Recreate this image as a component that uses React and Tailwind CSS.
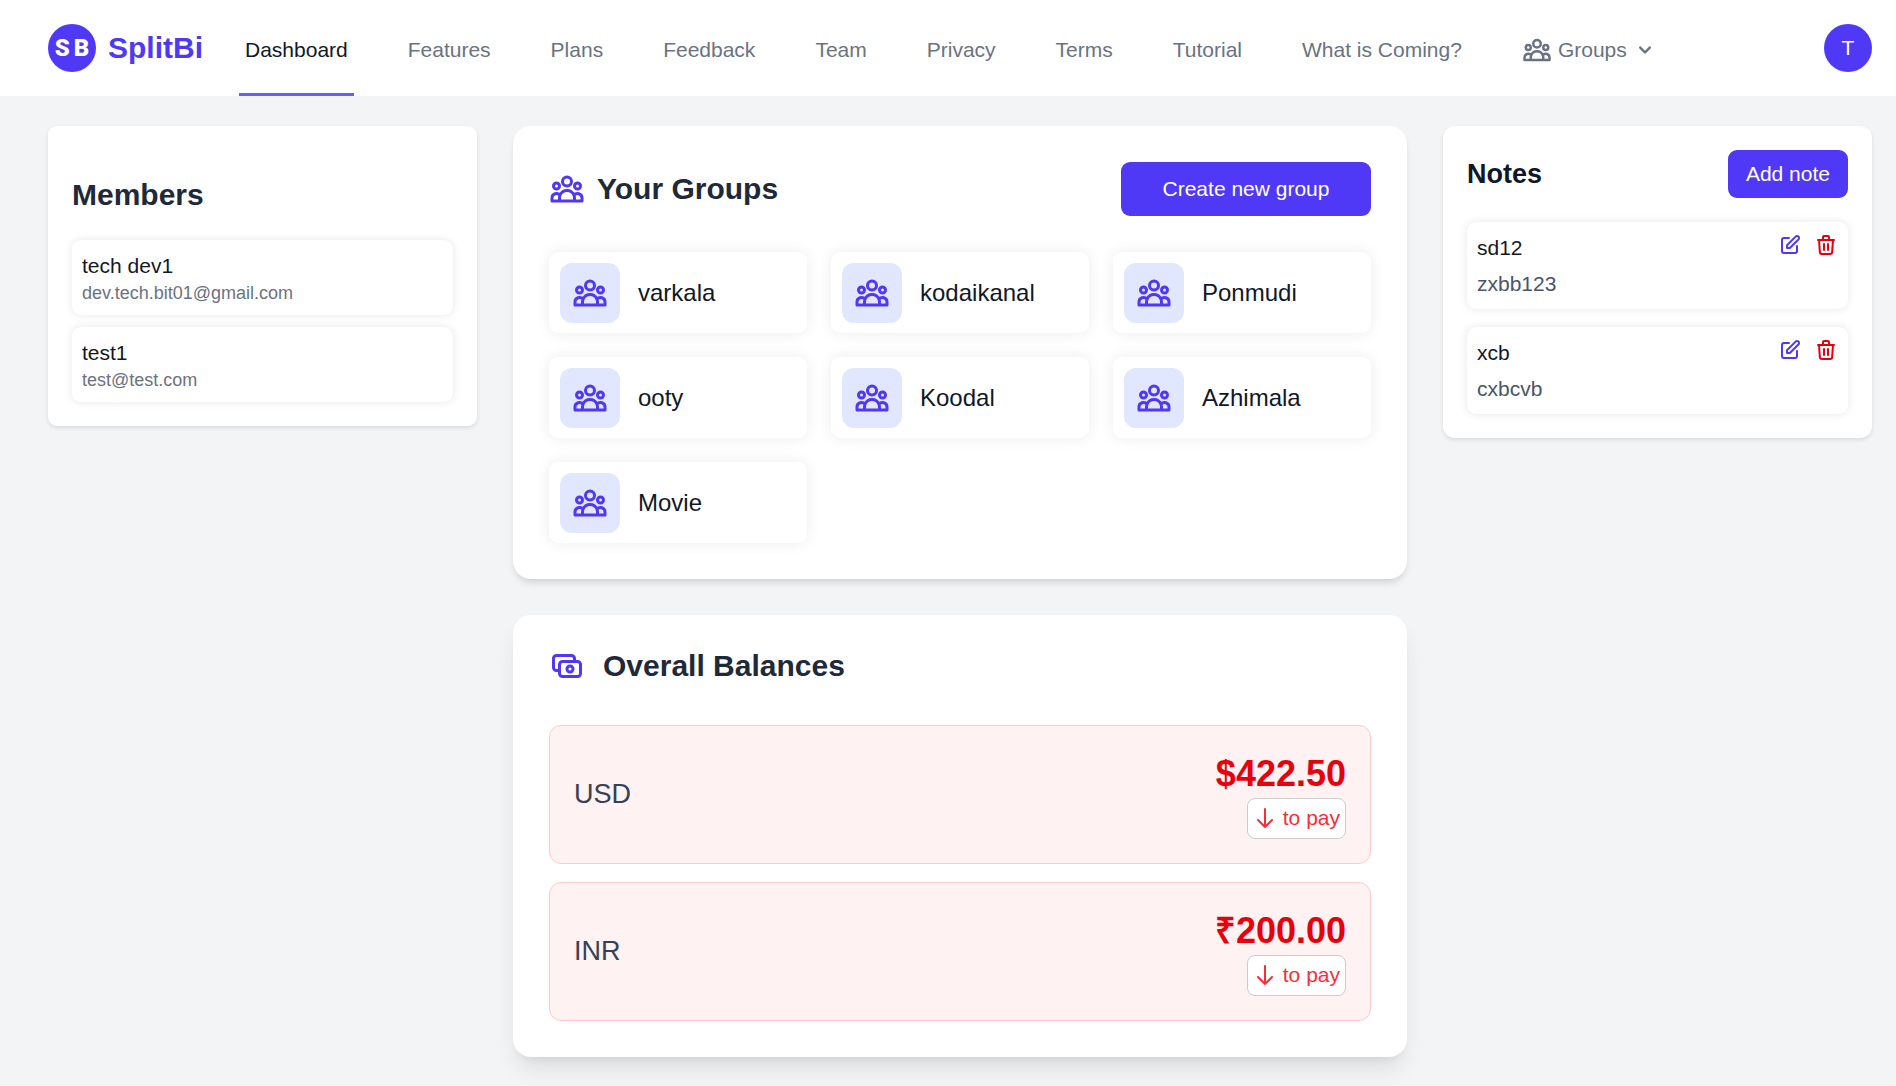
import {
  HiOutlineUserGroup,
  HiOutlineCash,
  HiOutlinePencilAlt,
  HiOutlineTrash,
  HiOutlineArrowDown,
  HiChevronDown,
} from "react-icons/hi";

const navLinks = [
  "Dashboard",
  "Features",
  "Plans",
  "Feedback",
  "Team",
  "Privacy",
  "Terms",
  "Tutorial",
  "What is Coming?",
];

const members = [
  { name: "tech dev1", email: "dev.tech.bit01@gmail.com" },
  { name: "test1", email: "test@test.com" },
];

const groups = ["varkala", "kodaikanal", "Ponmudi", "ooty", "Koodal", "Azhimala", "Movie"];

const balances = [
  { currency: "USD", amount: "$422.50" },
  { currency: "INR", amount: "₹200.00" },
];

const notes = [
  { title: "sd12", body: "zxbb123" },
  { title: "xcb", body: "cxbcvb" },
];

function Header() {
  return (
    <header className="flex h-24 items-center bg-white pl-12 pr-6">
      <a href="#" className="flex items-center gap-3">
        <span className="flex size-12 items-center justify-center gap-1 rounded-full bg-indigo-600 font-[Impact,Roboto,sans-serif] text-[24px] font-black text-white">
          <span>S</span>
          <span>B</span>
        </span>
        <span className="text-[30px] leading-[42px] font-bold text-indigo-600">SplitBi</span>
      </a>
      <nav className="ml-9 flex h-full gap-12">
        {navLinks.map((label, i) => (
          <a
            key={label}
            href="#"
            aria-current={i === 0 ? "page" : undefined}
            className={
              i === 0
                ? "flex items-center border-b-3 border-indigo-500 px-1.5 pt-1.5 whitespace-nowrap text-gray-900"
                : "flex items-center border-b-3 border-transparent px-1.5 pt-1.5 whitespace-nowrap text-gray-500"
            }
          >
            {label}
          </a>
        ))}
        <button
          type="button"
          className="flex items-center gap-1.5 border-b-3 border-transparent px-1.5 pt-1.5 text-gray-500"
        >
          <HiOutlineUserGroup size={30} />
          Groups
          <HiChevronDown size={24} />
        </button>
      </nav>
      <button type="button" className="ml-auto size-12 rounded-full bg-indigo-600 text-white">
        T
      </button>
    </header>
  );
}

function Members() {
  return (
    <section className="rounded-[9px] bg-white px-6 pt-12 pb-6 shadow-[0_2px_4px_rgba(0,0,0,0.1)]">
      <h2 className="text-[30px] leading-[42px] font-bold text-gray-800">Members</h2>
      <ul className="mt-6 flex flex-col gap-3">
        {members.map((m) => (
          <li
            key={m.name}
            className="rounded-[9px] bg-white px-2.5 pt-[11px] pb-2.5 shadow-[0_0_8px_rgba(0,0,0,0.1)]"
          >
            <p className="text-gray-900">{m.name}</p>
            <p className="text-[18px] leading-6 text-gray-500">{m.email}</p>
          </li>
        ))}
      </ul>
    </section>
  );
}

function Groups() {
  return (
    <section className="rounded-[18px] bg-white p-9 shadow-[0_6px_9px_-2px_rgba(0,0,0,0.1),0_3px_6px_-3px_rgba(0,0,0,0.1)]">
      <div className="flex items-center justify-between">
        <h2 className="flex items-center gap-3 text-[30px] leading-[42px] font-bold text-gray-800">
          <HiOutlineUserGroup size={36} className="text-indigo-600" />
          Your Groups
        </h2>
        <button type="button" className="h-[54px] w-[250px] rounded-[9px] bg-indigo-600 text-white">
          Create new group
        </button>
      </div>
      <ul className="mt-9 grid grid-cols-3 gap-6">
        {groups.map((name) => (
          <li key={name}>
            <a
              href="#"
              className="flex items-center gap-[18px] rounded-[9px] bg-white px-[11px] pt-[11px] pb-2.5 text-[24px] text-gray-900 shadow-[0_0_15px_rgba(0,0,0,0.08)]"
            >
              <span className="flex size-[60px] items-center justify-center rounded-xl bg-indigo-100 text-indigo-600">
                <HiOutlineUserGroup size={36} />
              </span>
              {name}
            </a>
          </li>
        ))}
      </ul>
    </section>
  );
}

function Balances() {
  return (
    <section className="rounded-[18px] bg-white px-9 pt-[30px] pb-9 shadow-[0_15px_23px_-5px_rgba(0,0,0,0.1),0_6px_9px_-6px_rgba(0,0,0,0.1)]">
      <h2 className="flex items-center gap-[18px] text-[30px] leading-[42px] font-bold text-gray-800">
        <HiOutlineCash size={36} className="text-indigo-600" />
        Overall Balances
      </h2>
      <ul className="mt-[38px] flex flex-col gap-[18px]">
        {balances.map((b) => (
          <li
            key={b.currency}
            className="flex items-center justify-between rounded-xl border border-red-200 bg-red-50 p-6"
          >
            <span className="pb-0.5 text-[27px] leading-[42px] text-gray-700">{b.currency}</span>
            <div className="flex flex-col items-end">
              <span className="text-[36px] leading-[48px] font-bold text-red-600">{b.amount}</span>
              <span className="flex items-center gap-1.5 rounded-lg border border-[#ccc] bg-white px-[5px] pt-1 pb-[5px] text-red-500">
                <HiOutlineArrowDown size={24} />
                to pay
              </span>
            </div>
          </li>
        ))}
      </ul>
    </section>
  );
}

function Notes() {
  return (
    <section className="rounded-xl bg-white p-6 shadow-[0_2px_4px_rgba(0,0,0,0.1)]">
      <div className="flex items-center justify-between">
        <h2 className="text-[27px] leading-[42px] font-bold text-gray-900">Notes</h2>
        <button type="button" className="h-12 rounded-[9px] bg-indigo-600 px-[18px] text-white">
          Add note
        </button>
      </div>
      <ul className="mt-6 flex flex-col gap-[18px]">
        {notes.map((n) => (
          <li
            key={n.title}
            className="flex items-start justify-between rounded-[9px] bg-white px-2.5 pt-[11px] pb-2.5 shadow-[0_0_8px_rgba(0,0,0,0.1)]"
          >
            <div className="flex flex-col gap-1.5">
              <p className="text-gray-900">{n.title}</p>
              <p className="text-gray-600">{n.body}</p>
            </div>
            <div className="flex gap-3">
              <button type="button" aria-label="Edit note" className="text-indigo-600">
                <HiOutlinePencilAlt size={24} />
              </button>
              <button type="button" aria-label="Delete note" className="text-red-600">
                <HiOutlineTrash size={24} />
              </button>
            </div>
          </li>
        ))}
      </ul>
    </section>
  );
}

export default function App() {
  return (
    <div className="min-h-screen bg-gray-100 font-['Liberation_Sans',Arial,sans-serif] text-[21px] leading-[30px]">
      <Header />
      <main className="grid grid-cols-4 items-start gap-9 pt-[30px] pr-6 pb-[29px] pl-12">
        <Members />
        <div className="col-span-2 flex flex-col gap-9">
          <Groups />
          <Balances />
        </div>
        <Notes />
      </main>
    </div>
  );
}
